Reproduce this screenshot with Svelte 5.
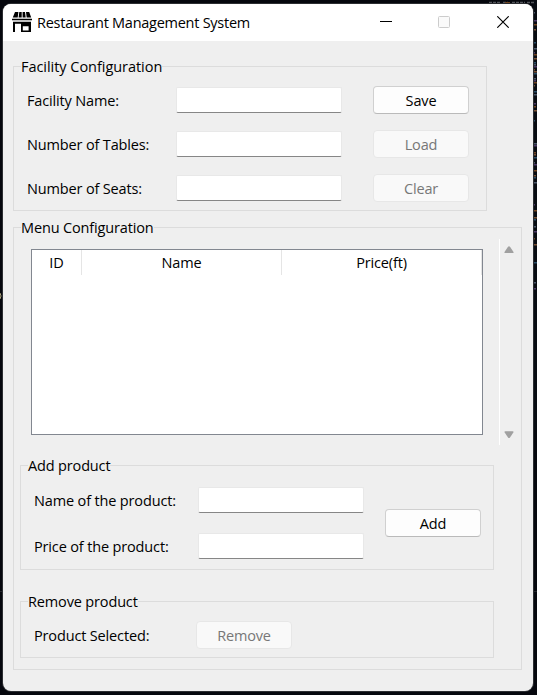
<script>
  const facilityRows = [
    { label: 'Facility Name:', action: 'Save', enabled: true },
    { label: 'Number of Tables:', action: 'Load', enabled: false },
    { label: 'Number of Seats:', action: 'Clear', enabled: false }
  ];
  const columns = ['ID', 'Name', 'Price(ft)'];
  const productFields = ['Name of the product:', 'Price of the product:'];
  const palette = ['#4a5668', '#704521', '#294d66', '#4c3865', '#765034'];
  const speckRows = [
    12, 20, 24, 29, 42, 48, 52, 54, 58, 62, 64, 66, 69, 71, 73, 78, 80, 82, 85, 91, 94, 103, 106,
    110, 120, 143, 145, 152, 154, 157, 162, 164, 170, 175, 177, 182, 204, 210, 217, 219, 226, 231,
    238, 244, 262, 282, 288
  ];
  const specks = speckRows.map((y, i) => ({ y, x: 533 + (i % 2), w: 2 + (i % 3), c: palette[(i * 3) % 5] }));
</script>

<div class="desktop">
  <svg class="backdrop" width="537" height="695" aria-hidden="true">
    <rect x="533" width="4" height="430" fill="#080c12" />
    {#each specks as s}
      <rect x={s.x} y={s.y} width={s.w} height="1.5" fill={s.c} />
    {/each}
    <path d="M489 2.5h12m2 0h5m4 0h13m2 0h8" stroke="#52545a" stroke-width="1.5" stroke-dasharray="3 1" />
    <path d="M505 2.5h5" stroke="#704521" />
    <path d="M0 591.5h3M533 591.5h4" stroke="#24262b" />
    <path d="M0 293q2 3 0 6" stroke="#aaa17c" fill="none" />
    <path d="M2.5 154v4M2.5 556v6" stroke="#233f8c" />
  </svg>
  <main class="window">
    <header>
      <svg class="shop" width="20" height="20" viewBox="0 0 20 20" aria-hidden="true">
        <path d="M3 0H6.4L5.7 5.5H0.8zM7.3 0h2.4v5.5H6.6zM10.6 0H13l.7 5.5h-3.1zM14 0h3.2l2 5.5h-4.5z" />
        <path d="M0 6.8h20v1.5H0z" />
        <path fill-rule="evenodd" d="M1 9.8h18V20H9v-8.3H3V20H1zM10.8 14.2v4.3h5.8v-4.3z" />
      </svg>
      <h1>Restaurant Management System</h1>
      <div class="controls">
        <svg width="12" height="12" aria-hidden="true"><path d="M0 5.5h12" stroke="#000" /></svg>
        <svg width="12" height="12" aria-hidden="true"><rect x=".5" y=".5" width="11" height="11" rx="1" fill="#fafafa" stroke="#ccc" /></svg>
        <svg class="close" width="12" height="12" aria-hidden="true"><path d="M.3.3l11.4 11.4M11.7.3L.3 11.7" stroke="#000" stroke-width="1.15" /></svg>
      </div>
    </header>

    <section class="group facility">
      <h2>Facility Configuration</h2>
      {#each facilityRows as row}
        <div class="row">
          <label for={row.action}>{row.label}</label>
          <input id={row.action} />
          <button disabled={!row.enabled}>{row.action}</button>
        </div>
      {/each}
    </section>

    <section class="group menu">
      <h2>Menu Configuration</h2>
      <div class="listing">
        <div class="table">
          <div class="thead">
            {#each columns as c}<span>{c}</span>{/each}
          </div>
        </div>
        <div class="scroll">
          <svg width="10" height="8" aria-hidden="true"><path d="M4 .7Q5-.2 6 .7L9.5 6q.3 1-.8 1H1.3Q.2 7 .5 6z" fill="#a0a0a0" /></svg>
          <svg width="10" height="8" aria-hidden="true"><path d="M4 6.6Q5 7.6 6 6.6L9.5 1.3q.3-1-.8-1H1.3Q.2.3.5 1.3z" fill="#a0a0a0" /></svg>
        </div>
      </div>

      <section class="group add">
        <h2>Add product</h2>
        <div class="add-body">
          <div class="fields">
            {#each productFields as f}
              <div class="field"><label for={f}>{f}</label><input id={f} /></div>
            {/each}
          </div>
          <button>Add</button>
        </div>
      </section>

      <section class="group remove">
        <h2>Remove product</h2>
        <div class="remove-row"><span>Product Selected:</span><button disabled>Remove</button></div>
      </section>
    </section>
  </main>
</div>

<style>
  :global(body) { margin: 0; overflow: hidden; }
  * { box-sizing: border-box; }
  .desktop {
    position: relative;
    width: 537px;
    height: 695px;
    padding: 4px 4px 4px 3px;
    background: #05070d;
    color: #000;
    font: 14.5px/20px 'Open Sans', 'Noto Sans', sans-serif;
    letter-spacing: -0.15px;
    white-space: nowrap;
  }
  .backdrop { position: absolute; left: 0; top: 0; }
  .window {
    position: relative;
    width: 530px;
    height: 687px;
    background: #efefef;
    border-radius: 8px;
    overflow: hidden;
    box-shadow: 0 0 0 1px #2b2d31;
  }
  header { display: flex; align-items: center; height: 37px; padding: 0 24px 0 9px; background: #fff; }
  h1, h2 { margin: 0; font: inherit; }
  h1 { margin-left: 5px; letter-spacing: -0.26px; }
  .shop { margin-top: -1px; }
  .controls { display: flex; gap: 46px; margin: -1px 0 0 auto; }
  .controls svg { display: block; }
  .controls .close { margin-left: 1px; }
  .group { display: flex; flex-direction: column; border: 1px solid #dcdcdc; }
  h2 { align-self: flex-start; height: 20px; margin: -10px 0 0 7px; background: #efefef; }
  .facility { width: 474px; height: 145px; margin: 25px 0 0 10px; }
  .facility h2 { letter-spacing: -0.04px; }
  .row { display: flex; align-items: center; height: 28px; margin: 9px 0 0 13px; }
  .row + .row { margin-top: 16px; }
  .row label { width: 149px; padding-top: 2px; }
  .row button { margin-left: 31px; }
  input {
    width: 166px;
    height: 26px;
    padding: 0;
    border: 1px solid #e8e8e8;
    border-bottom-color: #868686;
    border-radius: 2px;
    background: #fff;
    outline: 0;
  }
  button {
    width: 96px;
    height: 28px;
    padding: 1px 0 0;
    border: 1px solid #d0d0d0;
    border-bottom-color: #bababa;
    border-radius: 4px;
    background: #fdfdfd;
    color: #000;
    font: inherit;
    letter-spacing: inherit;
  }
  button:disabled { background: #f9f9f9; border-color: #e7e7e7; color: #777; }
  .menu { width: 509px; height: 443px; margin: 16px 0 0 10px; }
  .listing { display: flex; height: 206px; margin: 1px 0 0 17px; }
  .table { width: 452px; height: 186px; margin-top: 10px; border: 1px solid #828790; background: #fff; }
  .thead { display: grid; grid-template-columns: 50px 200px 200px; height: 24px; line-height: 25px; text-align: center; }
  .thead span { border-right: 1px solid #e5e5e5; }
  .scroll {
    display: flex;
    flex-direction: column;
    align-items: center;
    justify-content: space-between;
    width: 17px;
    margin-left: 16px;
    padding: 7px 0 6px 2px;
    border-left: 1px solid #fff;
  }
  .scroll svg { flex: none; display: block; }
  .add, .remove { width: 474px; margin-left: 6px; }
  .add { height: 105px; margin-top: 20px; }
  .add-body { display: flex; gap: 21px; margin: 10px 0 0 13px; }
  .add-body button { margin-top: 23px; }
  .fields { display: flex; flex-direction: column; gap: 19px; }
  .field { display: flex; align-items: flex-end; height: 27px; }
  .field label { width: 164px; padding-bottom: 2px; }
  .remove { height: 57px; margin-top: 31px; }
  .remove-row { display: flex; align-items: center; margin: 9px 0 0 13px; }
  .remove-row span { width: 162px; padding-top: 2px; }
</style>
